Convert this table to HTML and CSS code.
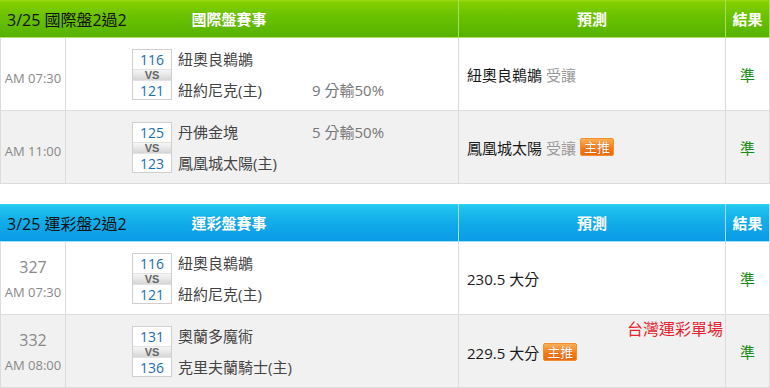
FILE: index.html
```html
<!DOCTYPE html>
<html lang="zh-Hant">
<head>
<meta charset="utf-8">
<link rel="stylesheet" href="styles.css">
</head>
<body>
<div class="page">
  <section class="board board-green">
    <div class="row head">
      <div class="cell head-main">
        <span class="head-date">3/25 國際盤2過2</span>
        <span class="head-title">國際盤賽事</span>
        <span></span>
      </div>
      <div class="cell head-cell">預測</div>
      <div class="cell head-cell">結果</div>
    </div>
    <div class="row">
      <div class="cell c-time single"><span class="time">AM 07:30</span></div>
      <div class="cell c-match">
        <div class="match">
          <div class="nums"><span class="num">116</span><span class="vs">VS</span><span class="num">121</span></div>
          <div class="teams"><span>紐奧良鵜鶘</span><span>紐約尼克(主)</span></div>
          <div class="odds"><span></span><span>9 分輸50%</span></div>
        </div>
      </div>
      <div class="cell c-pred"><span class="pick">紐奧良鵜鶘</span><span class="muted">受讓</span></div>
      <div class="cell c-res">準</div>
    </div>
    <div class="row alt">
      <div class="cell c-time single"><span class="time">AM 11:00</span></div>
      <div class="cell c-match">
        <div class="match">
          <div class="nums"><span class="num">125</span><span class="vs">VS</span><span class="num">123</span></div>
          <div class="teams"><span>丹佛金塊</span><span>鳳凰城太陽(主)</span></div>
          <div class="odds"><span>5 分輸50%</span><span></span></div>
        </div>
      </div>
      <div class="cell c-pred"><span class="pick">鳳凰城太陽</span><span class="muted">受讓</span><span class="badge">主推</span></div>
      <div class="cell c-res">準</div>
    </div>
  </section>

  <section class="board board-blue">
    <div class="row head">
      <div class="cell head-main">
        <span class="head-date">3/25 運彩盤2過2</span>
        <span class="head-title">運彩盤賽事</span>
        <span></span>
      </div>
      <div class="cell head-cell">預測</div>
      <div class="cell head-cell">結果</div>
    </div>
    <div class="row">
      <div class="cell c-time stacked"><span class="game-no">327</span><span class="time">AM 07:30</span></div>
      <div class="cell c-match">
        <div class="match">
          <div class="nums"><span class="num">116</span><span class="vs">VS</span><span class="num">121</span></div>
          <div class="teams"><span>紐奧良鵜鶘</span><span>紐約尼克(主)</span></div>
          <div class="odds"><span></span><span></span></div>
        </div>
      </div>
      <div class="cell c-pred"><span class="pick">230.5 大分</span></div>
      <div class="cell c-res">準</div>
    </div>
    <div class="row alt">
      <div class="cell c-time stacked"><span class="game-no">332</span><span class="time">AM 08:00</span></div>
      <div class="cell c-match">
        <div class="match">
          <div class="nums"><span class="num">131</span><span class="vs">VS</span><span class="num">136</span></div>
          <div class="teams"><span>奧蘭多魔術</span><span>克里夫蘭騎士(主)</span></div>
          <div class="odds"><span></span><span></span></div>
        </div>
      </div>
      <div class="cell c-pred has-note"><span class="pick">229.5 大分</span><span class="badge">主推</span><span class="note">台灣運彩單場</span></div>
      <div class="cell c-res">準</div>
    </div>
  </section>
</div>
</body>
</html>
```

FILE: styles.css
```css
* { box-sizing: border-box; }
html, body { margin: 0; padding: 0; background: #fff; }
body {
  font-family: "Open Sans", "Noto Sans CJK TC", sans-serif;
  font-size: 15px;
  color: #222;
}
.page {
  display: flex;
  flex-direction: column;
  gap: 20px;
  width: 770px;
}
.board { display: flex; flex-direction: column; }

.row {
  display: grid;
  grid-template-columns: 65px 393px 267px 45px;
  height: 73px;
  border-bottom: 1px solid #dcdcdc;
  background: #fff;
}
.row.alt { background: #f1f1f1; }
.cell {
  border-left: 1px solid #dcdcdc;
  display: flex;
  align-items: center;
  min-width: 0;
}
.cell:last-child { border-right: 1px solid #dcdcdc; }

/* header */
.row.head {
  height: 38px;
  border-bottom: 1px solid #b4e063;
}
.board-green .row.head {
  background: linear-gradient(#9fdd14 0, #84d002 2px, #6cc300 40%, #55b200 100%);
}
.board-blue .row.head {
  background: linear-gradient(#30d8f4 0, #22c6f0 2px, #13aeea 45%, #0a9ae6 100%);
  border-bottom-color: #9fe0f6;
}
.row.head .cell { border-left: 0; border-right: 0; }
.head-main {
  grid-column: span 2;
  display: grid;
  grid-template-columns: 1fr auto 1fr;
  align-items: center;
  padding-left: 7px;
}
.head-date { color: #111; font-size: 16px; }
.head-title {
  color: #fff;
  font-weight: bold;
  font-size: 15px;
  padding-right: 7px;
  text-shadow: 0 0 1px rgba(0,0,0,0.15);
}
.row.head .head-cell {
  justify-content: center;
  color: #fff;
  font-weight: bold;
  font-size: 15px;
  border-left: 1px solid #a7e05c;
}
.board-blue .row.head .head-cell { border-left-color: #9fe0f6; }
.row.head .head-cell:last-child { border-right: 1px solid #a7e05c; }
.board-blue .row.head .head-cell:last-child { border-right-color: #9fe0f6; }

/* time column */
.c-time { justify-content: center; }
.single { padding-top: 8px; }
.time { color: #888; font-size: 13px; }
.stacked {
  flex-direction: column;
  justify-content: center;
  padding-top: 4px;
}
.stacked .time { line-height: 26px; }
.game-no { color: #888; font-size: 16px; line-height: 24px; }

/* match column */
.c-match { padding-left: 66px; }
.match {
  display: flex;
  align-items: stretch;
  height: 51px;
}
.nums {
  width: 40px;
  border: 1px solid #cfcfcf;
  display: grid;
  grid-template-rows: 19px 12px 19px;
  background: #fff;
}
.num {
  color: #1a6db2;
  font-size: 14px;
  line-height: 19px;
  text-align: center;
}
.vs {
  background: linear-gradient(#f6f6f6, #d6d6d6);
  border-top: 1px solid #e2e2e2;
  border-bottom: 1px solid #e2e2e2;
  color: #666;
  font-size: 11px;
  font-weight: bold;
  line-height: 10px;
  text-align: center;
  font-family: "Liberation Sans", sans-serif;
}
.teams, .odds {
  display: flex;
  flex-direction: column;
  justify-content: space-between;
  line-height: 20px;
  color: #444;
  font-size: 15px;
}
.teams { width: 140px; padding-left: 6px; }
.odds { color: #777; }

/* prediction */
.c-pred { padding-left: 8px; gap: 4px; position: relative; }
.pick { color: #1a1a1a; }
.muted { color: #999; }
.badge {
  display: inline-block;
  height: 18px;
  line-height: 16px;
  padding: 0 3px;
  font-size: 13px;
  color: #fff;
  border: 1px solid #f0902c;
  border-radius: 2px;
  background: linear-gradient(#fbb055, #f27818 60%, #ee6a10);
  text-shadow: 0 0 1px rgba(120,40,0,0.6);
}
.has-note { padding-top: 2px; }
.note {
  position: absolute;
  top: 4px;
  right: 2px;
  color: #e8232f;
  font-size: 16px;
  line-height: 20px;
}

/* result */
.c-res { justify-content: center; color: #188c18; }
```
